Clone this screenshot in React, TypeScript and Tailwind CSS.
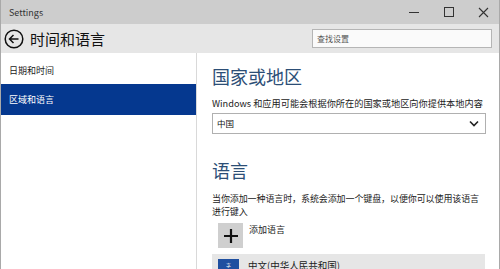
import React from "react";

const font = { fontFamily: '"Noto Sans CJK SC", "Noto Sans", sans-serif' };

export default function App() {
  return (
    <div className="w-[500px] h-[269px] overflow-hidden bg-white flex flex-col border-l border-r border-[#a9a9a9]" style={font}>
      {/* title bar */}
      <div className="h-[24px] shrink-0 bg-[#cdcdcd] flex items-center">
        <span className="ml-[8px] text-[9px] text-[#333] leading-none">Settings</span>
        <div className="ml-auto -mr-[2px] flex items-center h-full">
          <div className="w-[35px] h-full flex items-center justify-center">
            <div className="w-[10px] h-px bg-[#333]" />
          </div>
          <div className="w-[35px] h-full flex items-center justify-center">
            <div className="w-[10px] h-[10px] border border-[#333]" />
          </div>
          <div className="w-[35px] h-full flex items-center justify-center">
            <svg width="11" height="11" viewBox="0 0 11 11">
              <path d="M1 1L10 10M10 1L1 10" stroke="#333" strokeWidth="1.1" />
            </svg>
          </div>
        </div>
      </div>
      {/* header */}
      <div className="h-[29px] shrink-0 bg-[#e6e6e6] flex items-center">
        <svg width="22" height="22" viewBox="0 0 22 22" className="ml-[2px]">
          <circle cx="11" cy="11" r="8.8" fill="none" stroke="#111" strokeWidth="1.5" />
          <path d="M15.5 11H7M10.5 7L6.5 11L10.5 15" fill="none" stroke="#111" strokeWidth="1.5" />
        </svg>
        <span className="ml-[5px] text-[15px] leading-none text-[#111]">时间和语言</span>
        <div className="ml-auto mr-[7px] w-[180px] h-[19px] bg-[#fafafa] border border-[#b5b5b5] flex items-center">
          <span className="ml-[4px] text-[8px] text-[#555] leading-none">查找设置</span>
        </div>
      </div>
      {/* body */}
      <div className="flex flex-1 min-h-0">
        <div className="w-[196px] shrink-0 border-r border-[#d9d9d9] flex flex-col pt-[5px]">
          <div className="h-[26px] shrink-0 flex items-center pl-[8px] text-[9px] text-[#222]">日期和时间</div>
          <div className="h-[31px] shrink-0 flex items-center pl-[8px] text-[9px] text-white bg-[#05388f]">区域和语言</div>
        </div>
        <div className="flex-1 min-w-0 overflow-hidden pl-[15px] pr-[13px] pt-[12px]">
          <div className="text-[18px] leading-[22px] text-[#2c4e76]">国家或地区</div>
          <div className="mt-[10px] text-[9.2px] leading-[12px] text-[#222] whitespace-nowrap">Windows 和应用可能会根据你所在的国家或地区向你提供本地内容</div>
          <div className="mt-[4px] h-[21px] border border-[#b0b0b0] flex items-center px-[4px]">
            <span className="text-[8.5px] text-[#111] leading-none">中国</span>
            <svg width="10" height="7" viewBox="0 0 10 7" className="ml-auto mr-[2px]">
              <path d="M1 1.5L5 5.5L9 1.5" fill="none" stroke="#222" strokeWidth="1.6" />
            </svg>
          </div>
          <div className="mt-[25px] text-[18px] leading-[22px] text-[#2c4e76]">语言</div>
          <div className="mt-[11px] text-[9px] tracking-[-0.1px] leading-[13px] text-[#222] whitespace-nowrap">
            当你添加一种语言时，系统会添加一个键盘，以便你可以使用该语言
            <br />
            进行键入
          </div>
          <div className="mt-[5px] flex items-start pl-[6px]">
            <div className="w-[25px] h-[25px] bg-[#cfcfcf] flex items-center justify-center">
              <svg width="14" height="14" viewBox="0 0 14 14">
                <path d="M7 0V14M0 7H14" stroke="#111" strokeWidth="2.2" />
              </svg>
            </div>
            <span className="ml-[6px] mt-[1px] text-[9px] text-[#222] leading-[12px]">添加语言</span>
          </div>
          <div className="mt-[6px] h-[30px] mr-[1px] bg-[#e6e6e6] flex items-start pl-[6px] pt-[5px]">
            <div className="w-[21px] h-[22px] bg-[#1f4fa0] flex items-start justify-center pt-[3px]">
              <span className="text-[5px] text-white leading-none">字</span>
            </div>
            <span className="ml-[9px] text-[9.5px] text-[#222] leading-[12px]">中文(中华人民共和国)</span>
          </div>
        </div>
      </div>
    </div>
  );
}
